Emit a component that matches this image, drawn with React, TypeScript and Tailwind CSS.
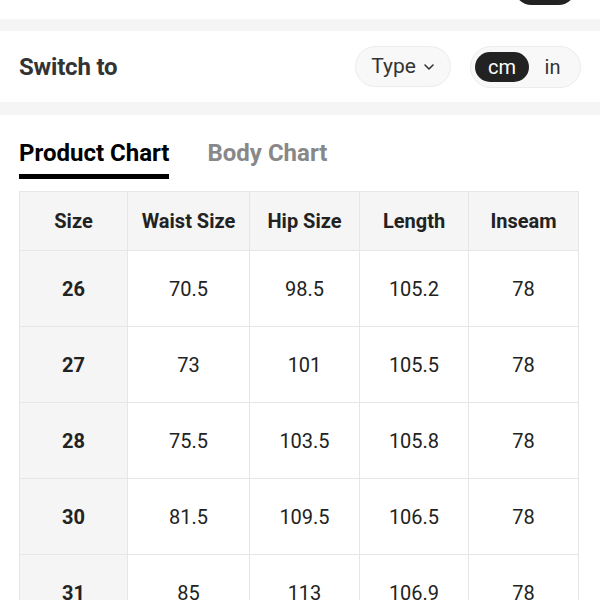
import React from "react";

const rows = [
  ["26", "70.5", "98.5", "105.2", "78"],
  ["27", "73", "101", "105.5", "78"],
  ["28", "75.5", "103.5", "105.8", "78"],
  ["30", "81.5", "109.5", "106.5", "78"],
  ["31", "85", "113", "106.9", "78"],
];
const headers = ["Size", "Waist Size", "Hip Size", "Length", "Inseam"];
const widths = ["w-[108px]", "w-[122px]", "w-[110px]", "w-[109px]", "w-[110px]"];

export default function App() {
  return (
    <div className="w-[600px] h-[600px] overflow-hidden bg-white text-[#222]" style={{ fontFamily: "Roboto, 'Noto Sans', sans-serif" }}>
      <div className="h-[19px] relative">
        <div className="absolute left-[514px] top-[-30px] w-[62px] h-[35px] rounded-full bg-[#222]" />
      </div>
      <div className="h-[12px] bg-[#f5f5f5]" />
      <div className="h-[71px] flex items-center px-[19px]">
        <div className="text-[24px] font-bold text-[#333] tracking-[-0.2px]">Switch to</div>
        <div className="ml-auto flex items-center gap-[19px]">
          <div className="h-[41px] w-[96px] rounded-full border border-[#ececec] bg-[#f8f8f8] flex items-center justify-center gap-[7px] text-[21px] text-[#333]">
            <span>Type</span>
            <svg width="12" height="8" viewBox="0 0 12 8" fill="none"><path d="M2 2l4 4 4-4" stroke="#333" strokeWidth="1.6" strokeLinecap="round" strokeLinejoin="round" /></svg>
          </div>
          <div className="h-[42px] w-[111px] rounded-full border border-[#ececec] bg-[#f8f8f8] flex items-center px-[4px]">
            <div className="h-[30px] w-[54px] rounded-full bg-[#222] text-white text-[20px] flex items-center justify-center">cm</div>
            <div className="flex-1 text-center text-[20px] text-[#333]">in</div>
          </div>
        </div>
      </div>
      <div className="h-[13px] bg-[#f5f5f5]" />
      <div className="px-[19px] pt-[23px]">
        <div className="flex gap-[38px] text-[24px] font-bold">
          <div className="flex flex-col">
            <span className="text-black leading-[30px]">Product Chart</span>
            <div className="h-[5px] bg-black mt-[6px]" />
          </div>
          <span className="text-[#888] leading-[30px]">Body Chart</span>
        </div>
        <div className="mt-[12px] w-[560px] overflow-hidden">
          <div className="flex w-max border-t border-l border-[#e6e6e6]">
            {headers.map((h, i) => (
              <div key={h} className={`${widths[i]} h-[59px] shrink-0 bg-[#f5f5f5] border-r border-b border-[#e6e6e6] flex items-center justify-center text-[20px] font-bold text-[#222]`}>{h}</div>
            ))}
          </div>
          {rows.map((r) => (
            <div key={r[0]} className="flex w-max border-l border-[#e6e6e6]">
              {r.map((c, i) => (
                <div key={i} className={`${widths[i]} h-[76px] shrink-0 border-r border-b border-[#e6e6e6] flex items-center justify-center text-[20px] ${i === 0 ? "bg-[#f5f5f5] font-bold" : "bg-white"} text-[#222]`}>{c}</div>
              ))}
            </div>
          ))}
        </div>
      </div>
    </div>
  );
}
